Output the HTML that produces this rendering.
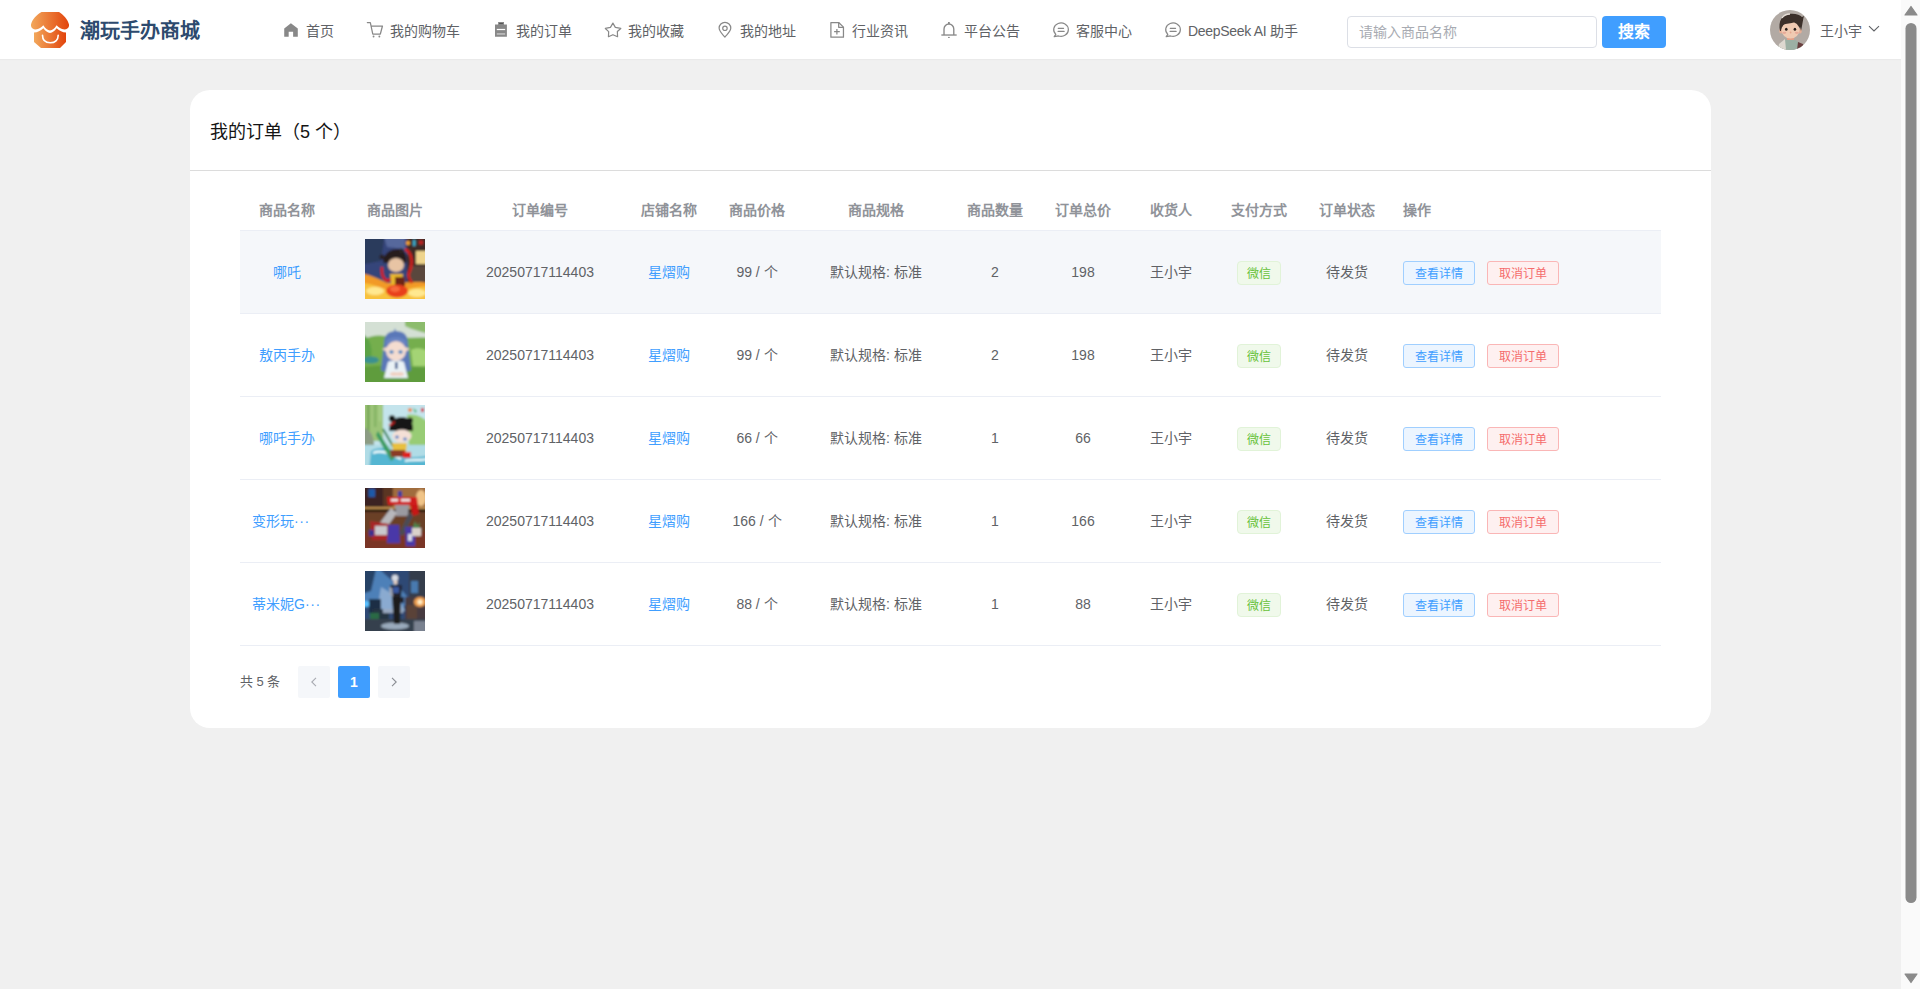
<!DOCTYPE html>
<html lang="zh-CN">
<head>
<meta charset="utf-8">
<title>我的订单</title>
<style>
html,body{margin:0;padding:0;width:1920px;height:989px;overflow:hidden;background:#f0f0f0;font-family:"Liberation Sans",sans-serif;}
*{box-sizing:border-box;}
.abs{position:absolute;}
#hdr{position:absolute;left:0;top:0;width:1901px;height:59px;background:#fff;box-shadow:0 1px 1px rgba(0,0,0,0.025);}
.logo-t{position:absolute;left:80px;top:17px;font-size:20px;line-height:28px;font-weight:bold;color:#2d4a6e;white-space:nowrap;}
.nav{position:absolute;top:19px;height:24px;line-height:24px;font-size:14px;color:#606266;white-space:nowrap;}
.ico{position:absolute;top:18px;width:22px;height:22px;}
.search{position:absolute;left:1347px;top:16px;width:250px;height:32px;border:1px solid #dcdfe6;border-radius:4px;background:#fff;}
.search span{position:absolute;left:11px;top:4px;line-height:22px;font-size:14px;color:#a8abb2;}
.sbtn{position:absolute;left:1602px;top:16px;width:64px;height:32px;border-radius:4px;background:#409eff;color:#fff;font-size:16px;font-weight:bold;text-align:center;line-height:32px;}
.uname{position:absolute;left:1820px;top:19px;line-height:24px;font-size:14px;color:#606266;}
#sb{position:absolute;left:1901px;top:0;width:19px;height:989px;background:#fafafa;}
#card{position:absolute;left:190px;top:90px;width:1521px;height:638px;background:#fff;border-radius:20px;}
.ctitle{position:absolute;left:20px;top:30px;font-size:18px;line-height:24px;color:#141414;white-space:nowrap;}
.cline{position:absolute;left:0;top:80px;width:1521px;height:1px;background:#dcdcdc;}
table{position:absolute;left:50px;top:101px;border-collapse:collapse;table-layout:fixed;width:1421px;}
th{height:39px;padding:0;font-size:14px;font-weight:bold;color:#909399;text-align:center;border-bottom:1px solid #ebeef5;line-height:23px;}
td{height:83px;padding:2px 0 0 0;font-size:14px;color:#606266;text-align:center;border-bottom:1px solid #ebeef5;line-height:23px;vertical-align:middle;position:relative;}
tr.hov td{background:#f5f7fa;}
th.op,td.op{text-align:left;padding-left:12px;}
.lnk{color:#409eff;}
.img{position:absolute;left:31px;top:8px;width:60px;height:60px;overflow:hidden;}
.tag{display:inline-block;height:24px;padding:0 9px;border:1px solid #e1f3d8;background:#f0f9eb;color:#67c23a;font-size:12px;line-height:24px;border-radius:4px;}
.btn{display:inline-block;height:24px;width:72px;border:1px solid;border-radius:3px;font-size:12px;line-height:24px;text-align:center;vertical-align:middle;}
.b1{border-color:#a0cfff;background:#ecf5ff;color:#409eff;}
.b2{border-color:#fab6b6;background:#fef0f0;color:#f56c6c;margin-left:12px;}
.pg{position:absolute;top:576px;height:32px;}
.total{position:absolute;left:50px;top:582px;font-size:13px;line-height:20px;color:#606266;white-space:nowrap;}
.pbtn{position:absolute;top:576px;width:32px;height:32px;border-radius:2px;background:#f5f7fa;margin-left:0;}
.pbtn.act{background:#409eff;color:#fff;font-weight:bold;font-size:14px;line-height:32px;text-align:center;}
td.trunc{text-align:left;padding-left:12px;}
.dots{letter-spacing:0.6px;}
</style>
</head>
<body>
<div id="hdr">
  <svg class="abs" style="left:31px;top:12px" width="38" height="36" viewBox="0 0 38 36">
    <defs><linearGradient id="lg" x1="0" x2="1" y1="0" y2="0"><stop offset="0" stop-color="#f2a85c"/><stop offset="1" stop-color="#e2440c"/></linearGradient></defs>
    <path fill="url(#lg)" d="M10.5 0 H28 C32 2.5 37 7.5 38 12.5 C38.5 15.5 36 17.5 33.5 17.5 C30 17.5 27.5 15 25.6 13.3 C23.5 16.5 21.5 18.5 19 18.5 C16.5 18.5 14.5 16.5 12.3 13.3 C10.5 15 8 17.5 4.5 17.5 C2 17.5 -0.5 15.5 0 12.5 C1 7.5 6 2.5 10.5 0 Z"/>
    <path fill="url(#lg)" d="M3 20.5 C6.5 20.5 9.5 19 12.4 16.3 C14.5 19 16.5 21 19 21 C21.5 21 23.5 19 25.6 16.3 C28.5 19 31.5 20.5 35 20.5 V30 L29 36 H10 L3 30 Z"/>
    <path fill="none" stroke="#fff" stroke-width="1.6" stroke-linecap="round" d="M11.5 23.3 C11.5 28 14.5 30.8 19.3 30.8 C24 30.8 27.2 28 27.2 23.3"/>
  </svg>
  <div class="logo-t">潮玩手办商城</div>
<svg class="ico" style="left:280px;width:20px" viewBox="0 0 899 989"><path fill="#888" d="M490 235 L800 470 L800 845 L590 845 L590 615 L390 615 L390 845 L190 845 L190 470 Z"/></svg>
  <svg class="ico" style="left:364px;width:22px" viewBox="0 0 989 989"><g fill="none" stroke="#888" stroke-width="56" stroke-linejoin="round" stroke-linecap="round"><path d="M150 205 L285 205 L395 720 L735 720 L830 360 L335 360"/></g><circle cx="430" cy="830" r="42" fill="#888"/><circle cx="690" cy="830" r="42" fill="#888"/></svg>
  <svg class="ico" style="left:490px;width:22px" viewBox="0 0 989 989"><path fill="#888" d="M225 290 H365 L365 185 H630 L630 290 H760 V845 H225 Z"/><rect x="410" y="225" width="170" height="45" fill="#555"/><rect x="305" y="490" width="375" height="55" fill="#fff"/><rect x="305" y="690" width="375" height="55" fill="#d0d0d0"/></svg>
  <svg class="ico" style="left:602px;width:22px" viewBox="0 0 989 989"><path fill="none" stroke="#888" stroke-width="54" stroke-linejoin="round" d="M490 230 L600 420 L845 470 L690 610 L700 840 L490 750 L290 840 L300 610 L150 470 L380 420 Z"/></svg>
  <svg class="ico" style="left:714px;width:22px" viewBox="0 0 989 989"><g fill="none" stroke="#888" stroke-width="54" stroke-linejoin="round"><path d="M490 860 C350 700 230 600 230 455 A262 262 0 0 1 755 455 C755 600 630 700 490 860 Z"/><circle cx="492" cy="462" r="100"/></g></svg>
  <svg class="ico" style="left:826px;width:22px" viewBox="0 0 989 989"><g fill="none" stroke="#888" stroke-width="56" stroke-linejoin="round"><path d="M220 205 H570 L785 410 V865 H220 Z"/><path d="M570 205 V420 H785"/><path d="M365 610 H620 M490 500 V745"/></g></svg>
  <svg class="ico" style="left:938px;width:22px" viewBox="0 0 989 989"><g fill="none" stroke="#888" stroke-width="60"><path d="M270 760 V500 A220 230 0 0 1 710 500 V760"/><path d="M150 765 H840"/></g><rect x="450" y="180" width="80" height="90" fill="#888"/><rect x="450" y="850" width="80" height="45" fill="#888"/></svg>
  <svg class="ico" style="left:1050px;width:22px" viewBox="0 0 989 989"><g fill="none" stroke="#888" stroke-width="54" stroke-linejoin="round" stroke-linecap="round"><path d="M262 737 A330 300 0 1 1 382 807 L190 840 Z"/><path d="M370 465 H610 M365 605 H635"/></g></svg>
  <svg class="ico" style="left:1162px;width:22px" viewBox="0 0 989 989"><g fill="none" stroke="#888" stroke-width="54" stroke-linejoin="round" stroke-linecap="round"><path d="M262 737 A330 300 0 1 1 382 807 L190 840 Z"/><path d="M370 465 H610 M365 605 H635"/></g></svg>
  <div class="nav" style="left:306px">首页</div>
  <div class="nav" style="left:390px">我的购物车</div>
  <div class="nav" style="left:516px">我的订单</div>
  <div class="nav" style="left:628px">我的收藏</div>
  <div class="nav" style="left:740px">我的地址</div>
  <div class="nav" style="left:852px">行业资讯</div>
  <div class="nav" style="left:964px">平台公告</div>
  <div class="nav" style="left:1076px">客服中心</div>
  <div class="nav" style="left:1188px"><span style="letter-spacing:-0.3px">DeepSeek AI</span> 助手</div>
  <div class="search"><span>请输入商品名称</span></div>
  <div class="sbtn">搜索</div>
  <svg class="abs" style="left:1770px;top:10px" width="40" height="40" viewBox="0 0 40 40">
    <defs><clipPath id="av"><circle cx="20" cy="20" r="20"/></clipPath></defs>
    <g clip-path="url(#av)">
      <rect width="40" height="40" fill="#b2aaa4"/>
      <path d="M7 40 C9 33 13 29 20 29 C27 29 31 33 33 40 Z" fill="#9cb0a4"/>
      <path d="M9 34 L15 29 L16 40 L8 40 Z" fill="#ddd8d0"/>
      <path d="M28 32 L33 34 L33 40 L27 40 Z" fill="#6a4040"/>
      <rect x="17" y="24" width="7" height="6" fill="#e2a088"/>
      <ellipse cx="11" cy="21" rx="1.8" ry="2.6" fill="#e4ae96"/>
      <ellipse cx="30" cy="21" rx="1.8" ry="2.6" fill="#e4ae96"/>
      <ellipse cx="21" cy="13" rx="10.5" ry="8.5" fill="#3c302a"/><ellipse cx="20.5" cy="20" rx="9" ry="8.6" fill="#f0cab2"/>
      <path d="M10 21 C8 11 12 5 19 4 C25 3 30 5 32 7 L34 6 C33 9 33 12 31 21 C30 15 28 12 25 12 C21 14 16 13 13 15 C12 17 11 19 11 21 Z" fill="#3c302a"/>
      <path d="M12 8 C14 5 17 4 20 4" stroke="#e6ded6" stroke-width="1.3" fill="none"/>
      <ellipse cx="16.3" cy="19.3" rx="1.3" ry="1.5" fill="#2a201c"/><ellipse cx="24.9" cy="19.3" rx="1.3" ry="1.5" fill="#2a201c"/>
      <ellipse cx="14.3" cy="22.8" rx="2" ry="1.1" fill="#e8aa98"/><ellipse cx="26.8" cy="22.8" rx="2" ry="1.1" fill="#e8aa98"/>
      <circle cx="20.6" cy="22.5" r="0.9" fill="#e8a890"/>
    </g>
  </svg>
  <div class="uname">王小宇</div>
  <svg class="abs" style="left:1868px;top:25px" width="12" height="8" viewBox="0 0 12 8"><path d="M1 1.2 L6 6 L11 1.2" fill="none" stroke="#606266" stroke-width="1.1"/></svg>
</div>
<div id="sb">
  <svg class="abs" style="left:0;top:0" width="19" height="989" viewBox="0 0 19 989">
    <path d="M4 15 L10 6.5 L16 15 Z" fill="#8a8a8a" stroke="#8a8a8a" stroke-width="1.2" stroke-linejoin="round"/>
    <rect x="4.5" y="23" width="11" height="880" rx="5.5" fill="#8a8a8a"/>
    <path d="M4 974 L10 982.5 L16 974 Z" fill="#8a8a8a" stroke="#8a8a8a" stroke-width="1.2" stroke-linejoin="round"/>
  </svg>
</div>
<div id="card">
  <div class="ctitle">我的订单（5 个）</div>
  <div class="cline"></div>
  <table>
  <colgroup><col style="width:94px"><col style="width:121px"><col style="width:170px"><col style="width:88px"><col style="width:88px"><col style="width:150px"><col style="width:88px"><col style="width:88px"><col style="width:88px"><col style="width:88px"><col style="width:88px"><col style="width:270px"></colgroup>
  <tr><th>商品名称</th><th>商品图片</th><th>订单编号</th><th>店铺名称</th><th>商品价格</th><th>商品规格</th><th>商品数量</th><th>订单总价</th><th>收货人</th><th>支付方式</th><th>订单状态</th><th class="op">操作</th></tr>
  <tr class="hov"><td class="name"><span class="lnk">哪吒</span></td><td><div class="img"><svg width="60" height="60" viewBox="0 0 60 60"><defs><filter id="f1" x="-20%" y="-20%" width="140%" height="140%"><feGaussianBlur stdDeviation="1"/></filter></defs><g filter="url(#f1)">
<rect x="-6" y="-6" width="72" height="72" fill="#35457a"/>
<path d="M-6 -6 H20 L16 22 L-6 26 Z" fill="#2c3a5c"/>
<path d="M18 -6 H40 V10 L22 8 Z" fill="#56689c"/>
<path d="M42 -6 H66 V48 H42 Z" fill="#3e2c26"/>
<rect x="51" y="12" width="12" height="13" fill="#eed48c"/>
<rect x="44" y="27" width="20" height="16" fill="#5a463c"/>
<circle cx="43" cy="4" r="2.2" fill="#f0a030"/><rect x="48" y="1" width="2.5" height="6" fill="#3ab0d0"/><rect x="54" y="1.5" width="4" height="4" fill="#c02020"/>
<path d="M-6 34 C6 36 14 40 22 44 C34 44 50 42 66 44 V66 H-6 Z" fill="#f29a26"/>
<path d="M-6 44 C8 44 16 50 28 52 C40 52 52 46 66 48 V66 H-6 Z" fill="#f8c23c"/>
<ellipse cx="10" cy="52" rx="9" ry="4" fill="#ffe890"/>
<ellipse cx="52" cy="54" rx="9" ry="4" fill="#ffe890"/>
<path d="M40 10 C48 14 48 26 44 34 C42 38 46 42 47 44" stroke="#d41c1c" stroke-width="2.6" fill="none"/>
<path d="M17 28 C16 34 18 40 22 42 C26 40 30 38 33 37" stroke="#d41c1c" stroke-width="2.6" fill="none"/>
<path d="M18 24 C18 14 26 10 33 10 C39 10 43 16 41 24 Z" fill="#281c1e"/>
<circle cx="17" cy="18" r="2.5" fill="#2a2024"/><circle cx="36" cy="12" r="2.5" fill="#2a2024"/>
<ellipse cx="31" cy="26" rx="8" ry="7" fill="#e8c4a4"/>
<path d="M22 22 C26 18 34 17 40 21 L40 18 C34 14 26 15 22 20 Z" fill="#281c1e"/>
<path d="M25 35 H38 L36 50 H27 Z" fill="#eab82a"/>
<rect x="30" y="38" width="10" height="9" fill="#6a2818"/>
<ellipse cx="32" cy="52" rx="11" ry="6.5" fill="#e8401c"/>
<ellipse cx="30" cy="50" rx="5" ry="3" fill="#f86a3a"/>
</g></svg></div></td><td>20250717114403</td><td><span class="lnk">星熠购</span></td><td>99 / 个</td><td>默认规格: 标准</td><td>2</td><td>198</td><td>王小宇</td><td><span class="tag">微信</span></td><td>待发货</td><td class="op"><span class="btn b1">查看详情</span><span class="btn b2">取消订单</span></td></tr>
  <tr><td class="name"><span class="lnk">敖丙手办</span></td><td><div class="img"><svg width="60" height="60" viewBox="0 0 60 60"><defs><filter id="f2" x="-20%" y="-20%" width="140%" height="140%"><feGaussianBlur stdDeviation="0.95"/></filter></defs><g filter="url(#f2)">
<rect x="-6" y="-6" width="72" height="72" fill="#74ae4e"/>
<path d="M-6 -6 H66 V16 C50 14 36 18 20 14 C10 12 2 16 -6 18 Z" fill="#d4e0d4"/>
<path d="M40 -6 H66 V12 C56 10 48 8 40 4 Z" fill="#8cbc6c"/>
<path d="M-6 10 C4 14 8 24 6 36 L-6 38 Z" fill="#5ca244"/>
<path d="M46 28 C54 24 62 28 66 32 V44 H48 Z" fill="#a4d474"/>
<ellipse cx="6" cy="38" rx="8" ry="3.5" fill="#3a9090"/>
<path d="M-6 46 C10 42 30 44 66 46 V66 H-6 Z" fill="#5e9c3e"/>
<path d="M30 6 L32 12 L28 12 Z" fill="#6a88c4"/>
<path d="M19 22 C19 12 24 9 31 9 C38 9 43 12 43 22 L46 48 C40 52 22 52 16 48 Z" fill="#5a78b8"/>
<path d="M17 27 L22 25 L22 30 Z" fill="#f0d8c8"/><path d="M45 27 L40 25 L40 30 Z" fill="#f0d8c8"/>
<ellipse cx="31" cy="29" rx="10" ry="10" fill="#f4dcd0"/>
<path d="M21 24 C24 17 38 17 41 24 L41 20 C38 14 24 14 21 20 Z" fill="#6a86c4"/>
<ellipse cx="26.5" cy="30" rx="2.2" ry="1.8" fill="#3a80c0"/><ellipse cx="35.5" cy="30" rx="2.2" ry="1.8" fill="#3a80c0"/>
<path d="M23 40 C26 38 36 38 39 40 L43 56 H19 Z" fill="#eaf2f6"/>
<rect x="30" y="40" width="2.5" height="7" fill="#3a5a90"/>
<ellipse cx="29" cy="52" rx="4" ry="2" fill="#f0d0c0"/><ellipse cx="35" cy="52" rx="4" ry="2" fill="#f0d0c0"/>
</g></svg></div></td><td>20250717114403</td><td><span class="lnk">星熠购</span></td><td>99 / 个</td><td>默认规格: 标准</td><td>2</td><td>198</td><td>王小宇</td><td><span class="tag">微信</span></td><td>待发货</td><td class="op"><span class="btn b1">查看详情</span><span class="btn b2">取消订单</span></td></tr>
  <tr><td class="name"><span class="lnk">哪吒手办</span></td><td><div class="img"><svg width="60" height="60" viewBox="0 0 60 60"><defs><filter id="f3" x="-20%" y="-20%" width="140%" height="140%"><feGaussianBlur stdDeviation="0.95"/></filter></defs><g filter="url(#f3)">
<rect x="-6" y="-6" width="72" height="72" fill="#c4e4ec"/>
<path d="M-6 -6 H18 V36 H-6 Z" fill="#9cc478"/>
<rect x="2" y="-6" width="2.5" height="34" fill="#74a454"/><rect x="9" y="-6" width="2.5" height="28" fill="#84b464"/><rect x="14" y="-6" width="2" height="22" fill="#a8d088"/>
<path d="M42 10 C52 8 60 14 66 20 V42 H44 Z" fill="#98cc74"/>
<path d="M-6 22 C4 22 10 30 9 44 H-6 Z" fill="#8c9c84"/>
<path d="M-6 40 H66 V66 H-6 Z" fill="#b0dce6"/>
<path d="M6 46 C16 40 28 44 38 50 C46 54 56 52 66 50 V66 H4 Z" fill="#54b6d2"/>
<path d="M8 48 C18 44 26 50 36 54" stroke="#f4ffff" stroke-width="2.2" fill="none"/>
<path d="M40 56 C48 54 56 56 62 54" stroke="#f4ffff" stroke-width="2" fill="none"/>
<path d="M13 26 L30 53 L26 56 L11 30 Z" fill="#3a9c62"/>
<path d="M18 24 L32 48" stroke="#2a7c4c" stroke-width="2"/>
<path d="M24 26 C24 16 30 12 37 12 C44 12 49 17 48 26 Z" fill="#161616"/>
<circle cx="27" cy="13.5" r="3.2" fill="#161616"/><circle cx="45" cy="15.5" r="3" fill="#161616"/>
<path d="M23 20 L30 16 L29 21 Z" fill="#d42020"/>
<ellipse cx="37" cy="31" rx="9.5" ry="6.5" fill="#f4e0d6"/>
<path d="M27 24 C30 20 44 20 47 26 L47 22 C44 16 30 16 27 20 Z" fill="#161616"/>
<ellipse cx="32" cy="32" rx="1.8" ry="1.5" fill="#3a78c8"/><ellipse cx="40" cy="34" rx="1.8" ry="1.5" fill="#3a78c8"/>
<path d="M27 38 H42 L41 47 H28 Z" fill="#e8c040"/>
<path d="M25 45 H40 L42 52 H26 Z" fill="#8a3a28"/>
<rect x="38" y="47" width="8" height="6" fill="#e02020"/>
<circle cx="45" cy="5" r="2" fill="#f08030"/><path d="M48 3 L52 6 L50 8 Z" fill="#40b070"/><rect x="56" y="3" width="3" height="4" fill="#d02040"/>
</g></svg></div></td><td>20250717114403</td><td><span class="lnk">星熠购</span></td><td>66 / 个</td><td>默认规格: 标准</td><td>1</td><td>66</td><td>王小宇</td><td><span class="tag">微信</span></td><td>待发货</td><td class="op"><span class="btn b1">查看详情</span><span class="btn b2">取消订单</span></td></tr>
  <tr><td class="name trunc"><span class="lnk">变形玩<span class="dots">···</span></span></td><td><div class="img"><svg width="60" height="60" viewBox="0 0 60 60"><defs><filter id="f4" x="-20%" y="-20%" width="140%" height="140%"><feGaussianBlur stdDeviation="0.85"/></filter></defs><g filter="url(#f4)">
<rect x="-6" y="-6" width="72" height="72" fill="#5a3424"/>
<path d="M28 -6 H66 V22 H28 Z" fill="#a06c3e"/>
<ellipse cx="56" cy="10" rx="5" ry="8" fill="#f0c488"/>
<path d="M-6 -6 H18 V22 H-6 Z" fill="#3a2420"/>
<rect x="-6" y="19" width="72" height="2" fill="#c09050"/>
<rect x="-6" y="21" width="72" height="3" fill="#24160e"/>
<path d="M-6 24 H66 V44 H-6 Z" fill="#6a4028"/>
<path d="M-6 44 H66 V66 H-6 Z" fill="#7a3626"/>
<rect x="3.5" y="1" width="6.5" height="8" fill="#1e5aa8"/>
<rect x="33" y="3" width="4" height="6" fill="#3a3ca0"/>
<path d="M22 9 H52 L53 17 H23 Z" fill="#d01c1c"/>
<rect x="26" y="11" width="7" height="2.5" fill="#f0f0f0"/><rect x="36" y="11" width="9" height="2.5" fill="#f0f0f0"/>
<path d="M45 17 H53 L54 26 L48 28 Z" fill="#c81818"/>
<path d="M30 17 H44 L43 28 H31 Z" fill="#9a9aa0"/>
<path d="M26 20 L32 25 L20 42 L14 36 Z" fill="#b8b8bc"/>
<path d="M44 24 L34 46 L38 48 L48 28 Z" fill="#4c4c54"/>
<path d="M5 33 L24 36 L25 52 L7 52 Z" fill="#a82828"/>
<rect x="10" y="38" width="12" height="9" fill="#c8c8cc"/>
<rect x="4" y="42" width="5" height="6" fill="#3a3090"/>
<path d="M23 37 H34 L35 55 H22 Z" fill="#4838a8"/>
<path d="M40 39 H50 L50 58 H41 Z" fill="#4838a8"/>
<rect x="43" y="46" width="4" height="7" fill="#d8d8e8"/>
<path d="M47 40 H56 V48 H47 Z" fill="#dad2ca"/>
<path d="M48 40 L50 33 L52 38 L55 34 L54 40 Z" fill="#4a8a50"/>
</g></svg></div></td><td>20250717114403</td><td><span class="lnk">星熠购</span></td><td>166 / 个</td><td>默认规格: 标准</td><td>1</td><td>166</td><td>王小宇</td><td><span class="tag">微信</span></td><td>待发货</td><td class="op"><span class="btn b1">查看详情</span><span class="btn b2">取消订单</span></td></tr>
  <tr><td class="name trunc"><span class="lnk">蒂米妮G<span class="dots">···</span></span></td><td><div class="img"><svg width="60" height="60" viewBox="0 0 60 60"><defs><filter id="f5" x="-20%" y="-20%" width="140%" height="140%"><feGaussianBlur stdDeviation="0.85"/></filter></defs><g filter="url(#f5)">
<rect x="-6" y="-6" width="72" height="72" fill="#2e4a74"/>
<path d="M10 -6 C22 6 34 14 44 28 L36 40 L-6 34 V4 Z" fill="#4e80b8"/>
<path d="M16 16 C26 22 36 28 40 40 H12 Z" fill="#8aaad0"/>
<path d="M-6 -6 H12 L6 20 L-6 24 Z" fill="#264266"/>
<path d="M44 -6 H66 V28 H44 Z" fill="#343c4c"/>
<rect x="46" y="10" width="7" height="12" fill="#4a7ab0"/>
<path d="M40 26 H66 V50 H40 Z" fill="#463a40"/><rect x="42" y="34" width="10" height="14" fill="#5a4238"/>
<ellipse cx="55" cy="31" rx="6" ry="5" fill="#f0a050"/>
<circle cx="55" cy="31" r="2.5" fill="#fff0c8"/>
<ellipse cx="1" cy="33" rx="4" ry="3" fill="#5ac0ff"/>
<rect x="4" y="28" width="12" height="14" fill="#1e2e44"/>
<rect x="8" y="38" width="16" height="14" fill="#263442"/>
<rect x="5" y="42" width="9" height="8" fill="#2a6a44"/>
<rect x="18" y="38" width="20" height="4" fill="#98a8c0"/>
<path d="M-6 48 H66 V66 H-6 Z" fill="#36404e"/>
<rect x="49" y="50" width="12" height="12" fill="#7a8290"/>
<ellipse cx="30" cy="55" rx="14" ry="3.5" fill="#9aaabc"/>
<circle cx="30" cy="7" r="3.2" fill="#d8dce4"/>
<ellipse cx="30.5" cy="11.5" rx="2" ry="2" fill="#e8d0c0"/>
<path d="M25 14 H37 L36 27 H27 Z" fill="#22222a"/>
<rect x="28" y="16" width="6" height="6" fill="#3858a0"/>
<path d="M24 16 L27 17 L28 26 L25 24 Z" fill="#a0a8b8"/>
<path d="M27 26 H36 L35 53 H29 Z" fill="#1e1a1c"/>
<rect x="35" y="26" width="4" height="6" fill="#22222a"/>
</g></svg></div></td><td>20250717114403</td><td><span class="lnk">星熠购</span></td><td>88 / 个</td><td>默认规格: 标准</td><td>1</td><td>88</td><td>王小宇</td><td><span class="tag">微信</span></td><td>待发货</td><td class="op"><span class="btn b1">查看详情</span><span class="btn b2">取消订单</span></td></tr>
  </table>
  <div class="total">共 5 条</div>
  <div class="pbtn" style="left:108px"><svg class="abs" style="left:12px;top:11px" width="8" height="10" viewBox="0 0 8 10"><path d="M6 0.8 L1.8 5 L6 9.2" fill="none" stroke="#a8abb2" stroke-width="1.1"/></svg></div>
  <div class="pbtn act" style="left:148px">1</div>
  <div class="pbtn" style="left:188px"><svg class="abs" style="left:12px;top:11px" width="8" height="10" viewBox="0 0 8 10"><path d="M2 0.8 L6.2 5 L2 9.2" fill="none" stroke="#8a8d93" stroke-width="1.1"/></svg></div>
</div>
</body>
</html>
